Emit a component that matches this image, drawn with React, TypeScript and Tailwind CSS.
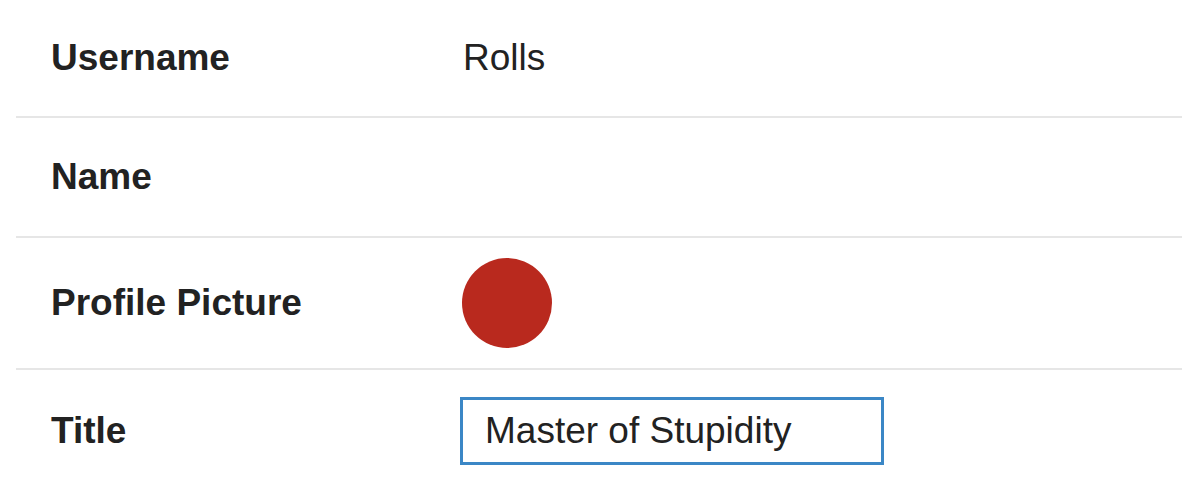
import { useState } from 'react';

const rows = [
  { label: 'Username', value: 'Rolls' },
  { label: 'Name', value: '' },
  { label: 'Profile Picture', value: '' },
  { label: 'Title', value: 'Master of Stupidity' },
];

export default function App() {
  const [title, setTitle] = useState('Master of Stupidity');

  return (
    <div className="min-h-screen bg-white pl-4 font-['Liberation_Sans',Arial,sans-serif] text-[37px] text-[#222]">
      {/* Row: username */}
      <div className="flex h-[118px] items-center border-b-2 border-[#e6e6e6]">
        <div className="w-[447px] pl-[35px] font-bold">{rows[0].label}</div>
        <div>{rows[0].value}</div>
      </div>

      {/* Row: name */}
      <div className="flex h-[120px] items-center border-b-2 border-[#e6e6e6]">
        <div className="w-[447px] pl-[35px] font-bold">{rows[1].label}</div>
        <div>{rows[1].value}</div>
      </div>

      {/* Row: avatar */}
      <div className="flex items-center border-b-2 border-[#e6e6e6] py-5">
        <div className="w-[446px] pl-[35px] font-bold">{rows[2].label}</div>
        <div className="h-[90px] w-[90px] rounded-full bg-[#b9291e]" />
      </div>

      {/* Row: title */}
      <div className="flex items-center py-[27px]">
        <div className="w-[444px] pl-[35px] font-bold">{rows[3].label}</div>
        <input
          value={title}
          onChange={(e) => setTitle(e.target.value)}
          className="h-[68px] w-[424px] border-[3px] border-[#3b87c6] px-[22px] text-[37px] text-[#222] outline-none"
        />
      </div>
    </div>
  );
}
